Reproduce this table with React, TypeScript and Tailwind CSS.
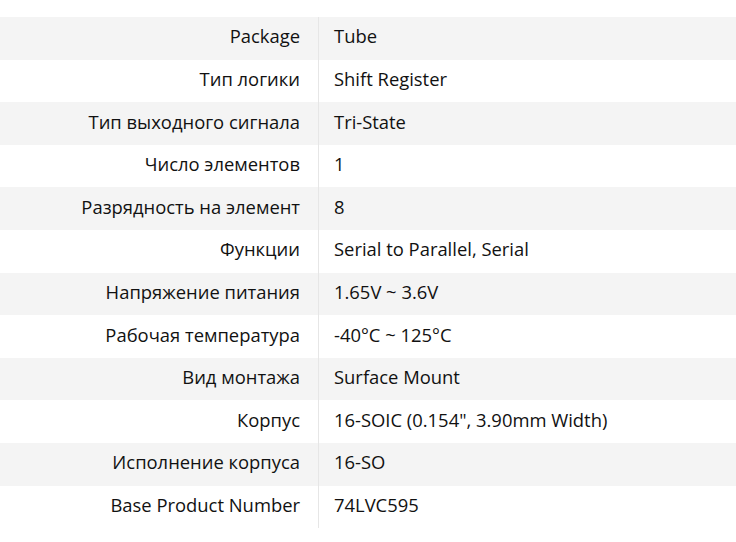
import React from "react";

type Spec = { label: string, value: string };

const specs: Spec[] = [
  { label: "Package", value: "Tube" },
  { label: "Тип логики", value: "Shift Register" },
  { label: "Тип выходного сигнала", value: "Tri-State" },
  { label: "Число элементов", value: "1" },
  { label: "Разрядность на элемент", value: "8" },
  { label: "Функции", value: "Serial to Parallel, Serial" },
  { label: "Напряжение питания", value: "1.65V ~ 3.6V" },
  { label: "Рабочая температура", value: "-40°C ~ 125°C" },
  { label: "Вид монтажа", value: "Surface Mount" },
  { label: "Корпус", value: "16-SOIC (0.154\", 3.90mm Width)" },
  { label: "Исполнение корпуса", value: "16-SO" },
  { label: "Base Product Number", value: "74LVC595" },
];

const SpecRow = ({ label, value, odd }: Spec & { odd: boolean }) => {
  return (
    <div className={odd ? "flex h-[42.6px] bg-[#f4f4f4]" : "flex h-[42.6px] bg-white"}>
      <div className="w-[318px] shrink-0 flex items-center justify-end pr-[18px] pb-[4px]">{label}</div>
      <div className="flex-1 flex items-center pl-[15px] pb-[4px] border-l border-[#e6e6e6]">{value}</div>
    </div>
  );
};

export default function App() {
  return (
    <div className="w-[736px] h-[542px] bg-white pt-[17px] text-[18.4px] text-[#111111]" style={{ fontFamily: '"Open Sans", sans-serif' }}>
      {specs.map((s, i) => (
        <SpecRow key={s.label} label={s.label} value={s.value} odd={i % 2 === 0} />
      ))}
    </div>
  );
}
